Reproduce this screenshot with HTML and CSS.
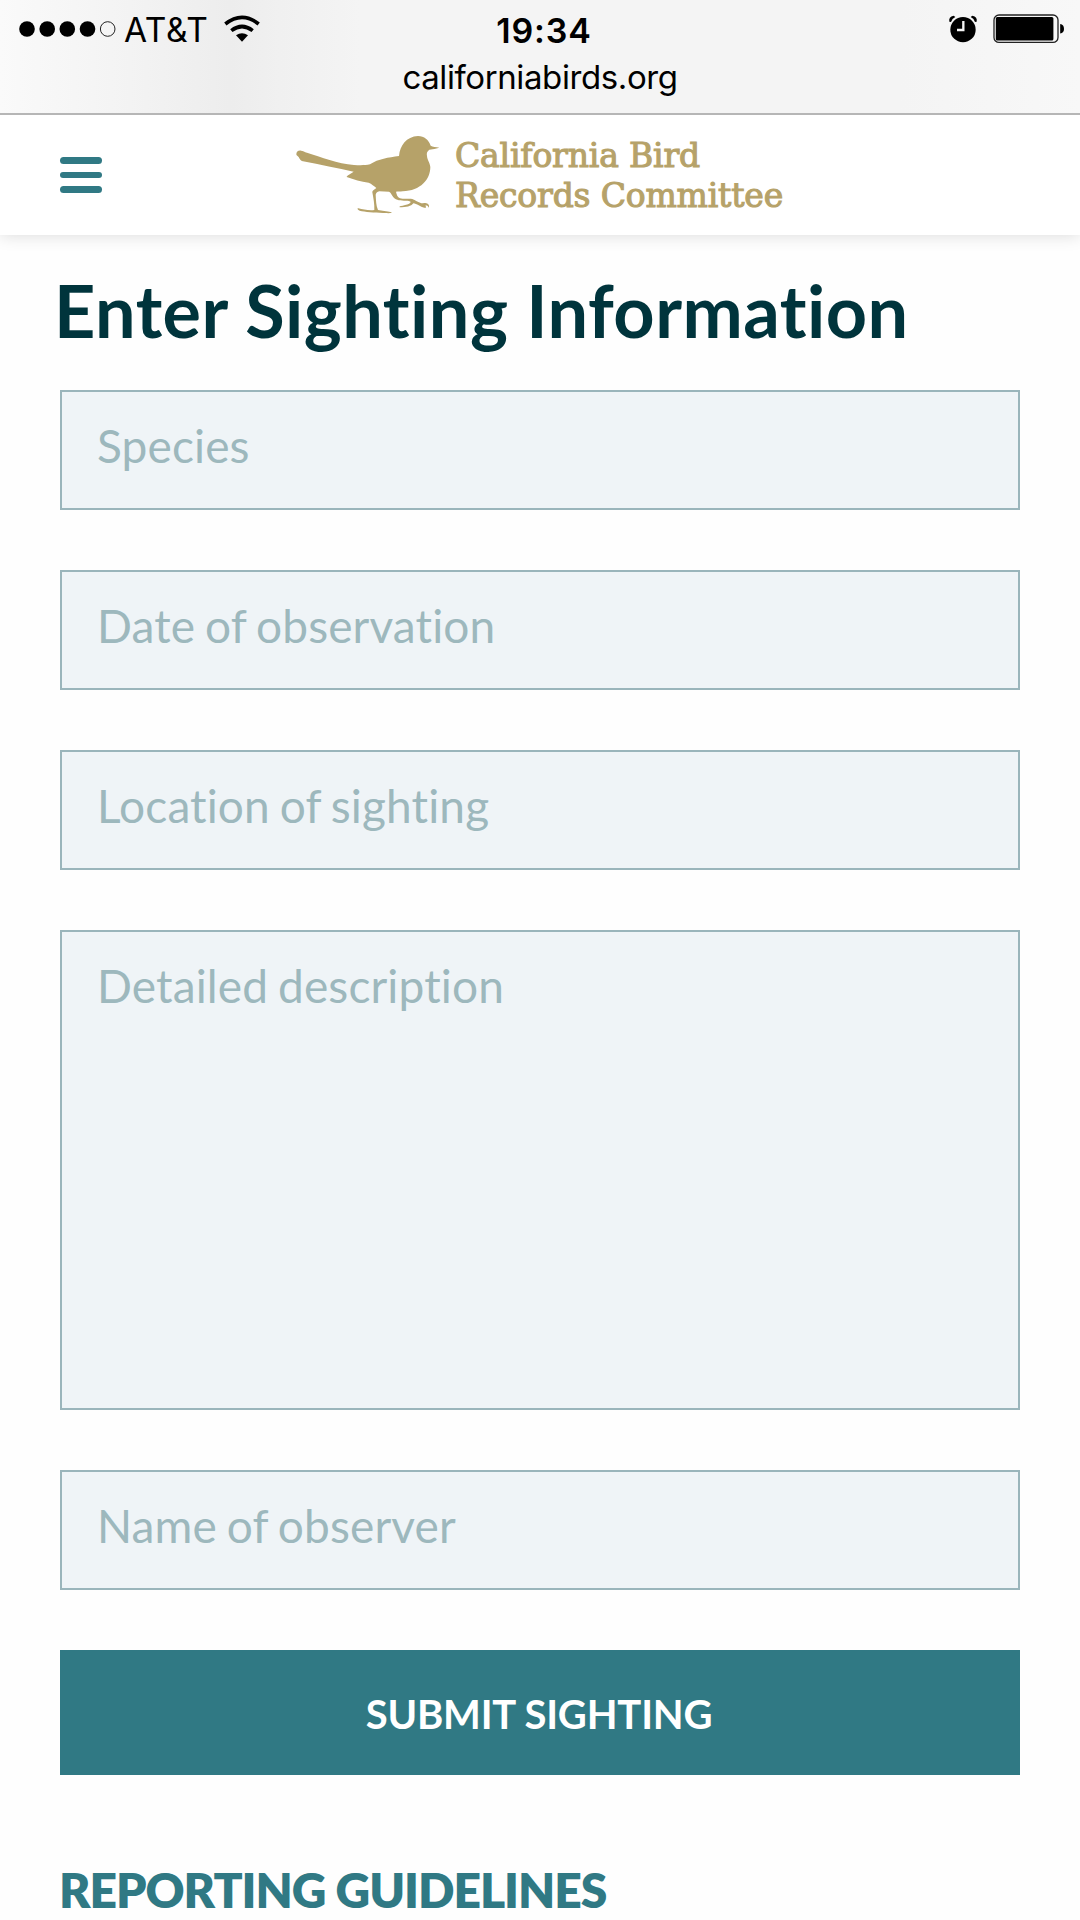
FILE: index.html
```html
<!DOCTYPE html>
<html lang="en">
<head>
<meta charset="utf-8">
<title>California Bird Records Committee</title>
<link rel="stylesheet" href="styles.css">
</head>
<body>
<div class="status">
  <div class="status-row">
    <div class="carrier">
      <svg class="signal" width="98" height="18" viewBox="0 0 98 18">
        <circle cx="8" cy="9" r="7.8"/><circle cx="28.2" cy="9" r="7.8"/><circle cx="48.3" cy="9" r="7.8"/><circle cx="68.5" cy="9" r="7.8"/>
        <circle class="empty" cx="88.7" cy="9" r="7.3"/>
      </svg>
      <span class="carrier-name">AT&amp;T</span>
      <svg class="wifi" width="36" height="28" viewBox="0 0 108 84">
        <path class="arc" d="M4 27Q54 -13 104 27"/>
        <path class="arc" d="M22 47Q54 22 86 47"/>
        <path d="M36 61Q54 48 72 61L54 80Z"/>
      </svg>
    </div>
    <span class="time">19:34</span>
    <div class="indicators">
      <svg class="alarm" width="30" height="28" viewBox="0 0 90 84">
        <circle cx="45" cy="44" r="38"/>
        <path d="M4 20Q1 5 17 2L22 6Q12 10 9 21ZM86 20Q89 5 73 2L68 6Q78 10 81 21Z"/>
        <path class="hands" d="M46 18V45H27"/>
      </svg>
      <svg class="battery" width="72" height="30" viewBox="0 0 72 30">
        <rect class="shell" x="1" y="1" width="64" height="27.4" rx="5"/>
        <rect x="2.8" y="3" width="57.6" height="23.5" rx="1.5"/>
        <path d="M67.2 10Q71 10.5 71 14.8Q71 19 67.2 19.6Z"/>
      </svg>
    </div>
  </div>
  <div class="url"><span class="url-text">californiabirds.org</span></div>
</div>
<header class="nav">
  <button class="menu" aria-label="Menu"><i class="bar"></i><i class="bar"></i><i class="bar"></i></button>
  <a class="brand">
    <svg class="bird" width="144" height="80" viewBox="50 44 432 240">
      <path d="M51 102C51 94 56 90 65 91C71 91 76 95 83 97C125 110 175 130 224 134C243 135 258 135 272 132C298 115 327 112 359 107C362 75 381 49 416 47C435 47 448 59 454 76C460 80 470 80 480 82C470 85 460 87 450 88C444 92 441 98 443 107C444 119 451 125 453 140C453 177 424 211 370 213C362 214 355 214 350 214C352 222 354 231 362 234C375 237 388 234 399 236C408 240 416 245 426 249C430 248 440 246 446 251C450 254 450 260 448 262C446 256 442 255 438 256C442 260 440 264 435 262C428 262 424 258 418 255C412 252 407 249 402 249C396 258 380 261 361 261C359 258 362 257 370 256C380 254 389 253 394 246C394 241 385 241 374 241C359 241 347 239 340 228C335 221 335 216 329 214L300 213C293 215 290 218 289 223C290 239 290 255 296 269C308 272 321 272 337 276C337 280 323 278 311 278C284 276 257 275 241 271C235 269 232 263 237 264C251 267 267 271 285 269C286 252 282 233 279 216C278 211 284 209 291 203C284 197 277 191 268 187C245 185 223 177 202 170C202 165 214 161 223 154C175 144 123 133 71 123C62 121 61 113 57 109C54 107 51 105 51 102Z"/>
    </svg>
    <span class="brand-name"><span class="line line-a">California Bird</span><span class="line line-b">Records Committee</span></span>
  </a>
</header>
<main class="page">
  <h1 class="title">Enter Sighting Information</h1>
  <form class="form">
    <input class="field" type="text" placeholder="Species">
    <input class="field" type="text" placeholder="Date of observation">
    <input class="field" type="text" placeholder="Location of sighting">
    <textarea class="field field-long" placeholder="Detailed description"></textarea>
    <input class="field" type="text" placeholder="Name of observer">
    <button class="submit" type="button"><span class="submit-text">SUBMIT SIGHTING</span></button>
  </form>
  <h2 class="subtitle">REPORTING GUIDELINES</h2>
</main>
</body>
</html>
```
FILE: styles.css
```css
* { box-sizing: border-box; }
html, body { margin: 0; height: 1920px; overflow: hidden; }
body { background: #fefefe; font-family: Lato, sans-serif; font-variant-ligatures: none; color: #00343c; display: flex; flex-direction: column; }
svg { display: block; }

.status {
  flex: none;
  height: 115px;
  border-bottom: 2px solid #b6b6b6;
  background: linear-gradient(90deg, #fafafa 0, #f3f3f3 130px, #ededed 230px, #f0f0f0 280px, #f4f4f4 360px, #f4f4f4 900px, #f8f8f8 1080px);
  font-family: Inter, "Liberation Sans", sans-serif;
  color: #000;
}
.status-row { display: grid; grid-template-columns: 1fr auto 1fr; align-items: center; height: 58px; padding: 0 15px 0 19px; }
.carrier { display: flex; align-items: center; }
.carrier-name { font-size: 33.5px; line-height: 40px; margin-left: 7px; margin-top: 2px; letter-spacing: 0.6px; }
.wifi { margin-left: 16px; }
.arc { fill: none; stroke: #000; stroke-width: 11; }
.empty { fill: none; stroke: #222; stroke-width: 1; }
.time { font-size: 34px; line-height: 40px; font-weight: 600; margin: 3px -3px 0 1px; letter-spacing: 0.9px; }
.indicators { display: flex; justify-content: flex-end; align-items: center; gap: 15px; }
.hands { fill: none; stroke: #f6f6f6; stroke-width: 7; }
.shell { fill: none; stroke: #222; stroke-width: 1.3; }
.url { text-align: center; font-size: 33px; line-height: 38px; letter-spacing: -0.4px; }

.nav {
  flex: none;
  height: 120px;
  display: grid;
  grid-template-columns: 1fr auto 1fr;
  align-items: center;
  padding: 0 60px;
  background: #fff;
  box-shadow: 0 0 16px rgba(0, 0, 0, 0.15);
  clip-path: inset(0 0 -30px 0);
}
.menu { display: flex; flex-direction: column; gap: 8px; width: 42px; margin-left: -0.5px; padding: 0; border: 0; background: none; }
.bar { width: 42px; height: 6.6px; border-radius: 4px; background: #307984; }
.brand { display: flex; align-items: center; width: 488px; color: #b6a269; }
.bird { fill: #b6a269; flex: none; }
.brand-name { margin-left: 15px; padding-top: 2px; font-family: "DejaVu Serif", serif; font-size: 33px; line-height: 40px; font-weight: 400; letter-spacing: -0.17px; -webkit-text-stroke: 1.1px #b6a269; }
.line { display: block; white-space: nowrap; }

.page { padding: 35px 60px 0; }
.title { margin: 0 0 0 -6px; font-size: 72px; line-height: 80px; font-weight: 700; letter-spacing: 0.46px; width: max-content; }
.form { display: flex; flex-direction: column; gap: 60px; margin-top: 40px; }
.field {
  display: block;
  width: 100%;
  height: 120px;
  margin: 0;
  padding: 0 35px 10px;
  border: 2px solid #9ab5bb;
  border-radius: 0;
  background: #eff4f7;
  font: 400 46px/54px Lato, sans-serif;
  font-variant-ligatures: none;
  letter-spacing: 0.13px;
  word-spacing: -2px;
  color: #00343c;
  outline: none;
  resize: none;
}
.field::placeholder { color: #9db8bd; opacity: 1; }
.field-long { height: 480px; padding-top: 27px; overflow: hidden; }
.submit { height: 125px; border: 0; padding: 2px 2px 0 0; background: #307984; color: #fff; font: 700 40px/48px Lato, sans-serif; letter-spacing: -0.2px; }
.subtitle { margin: 86px 0 0 -1px; font-size: 48px; line-height: 58px; font-weight: 800; letter-spacing: -1.03px; color: #307984; width: max-content; }
```
